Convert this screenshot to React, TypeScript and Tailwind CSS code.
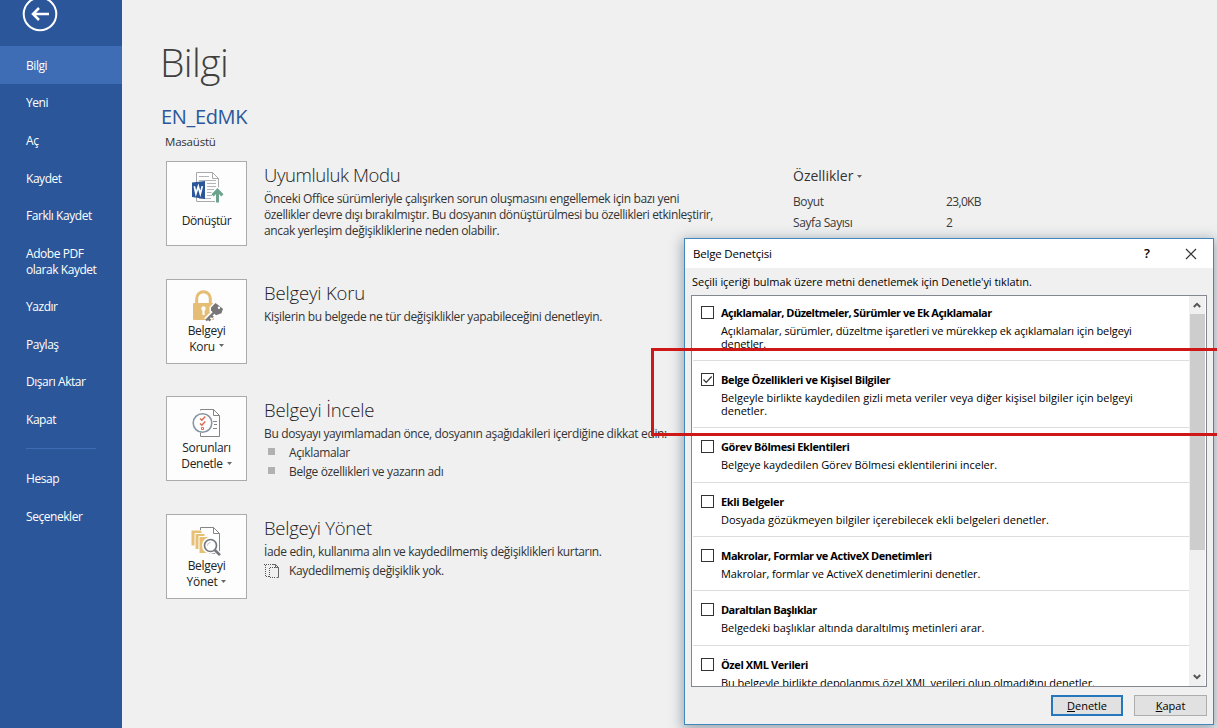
import React from "react";

const navItems = [
  { label: "Bilgi", active: true },
  { label: "Yeni" },
  { label: "Aç" },
  { label: "Kaydet" },
  { label: "Farklı Kaydet" },
  { label: "Adobe PDF\nolarak Kaydet", tall: true },
  { label: "Yazdır" },
  { label: "Paylaş" },
  { label: "Dışarı Aktar" },
  { label: "Kapat" },
];

function ConvertIcon() {
  return (
    <svg width="34" height="34" viewBox="0 0 34 34" fill="none">
      <path d="M6.5 1.5h16l6 6v23h-22z" fill="#fff" stroke="#a9a9a9" />
      <path d="M22.5 1.5v6h6" stroke="#a9a9a9" />
      <path d="M9 5.5h10M9 9.5h17M17 12.5h9M17 15.5h9M17 18.5h7M17 21.5h5M9 27.5h12M17 24.5h5" stroke="#b5b5b5" />
      <path d="M2 11.5 15 10v18L2 26z" fill="#2b579a" />
      <path d="m4.3 15.3 1.6 7.4 2.4-7.2 2 7.4 2-7.8" stroke="#fff" strokeWidth="1.7" />
      <path d="M27.5 32V19M22.5 24.3l5-5.3 5 5.3" stroke="#fff" strokeWidth="5" />
      <path d="M27.5 31.5V19M22.6 24.4l4.9-5.2 4.9 5.2" stroke="#6ba38c" strokeWidth="3" />
    </svg>
  );
}

function LockIcon() {
  return (
    <svg width="34" height="34" viewBox="0 0 34 34" fill="none">
      <path d="M6.7 15V9.5a6.8 6.8 0 0 1 13.6 0V15" stroke="#e6bd74" strokeWidth="3" />
      <rect x="3" y="14" width="21" height="17" rx="1" fill="#e6bd74" />
      <circle cx="13.5" cy="19.5" r="2.2" fill="#fff" />
      <path d="M13.5 20v6" stroke="#fff" strokeWidth="2.2" />
      <path d="m16.500 31.500 8.500-8.500" stroke="#fff" strokeWidth="6.500" />
      <path d="m19.500 18 5.500-5.500 9 7-1.500 6.500-7 2.500-6-6z" fill="#fff" />
      <path d="m16 31.500 9-9M18 29.500l2.500 2M21 26.500l2 2" stroke="#777" strokeWidth="2.400" />
      <path d="m21 18.500 4.500-4.500 7.500 5.800-1.500 4.500-5.500 2-5-4.800z" fill="#777" />
      <circle cx="29" cy="18.800" r="1.200" fill="#fff" />
    </svg>
  );
}

function InspectIcon() {
  return (
    <svg width="34" height="34" viewBox="0 0 34 34" fill="none">
      <path d="M10.500 4.500v-1h13l6 6v21h-19v-4" fill="#fff" stroke="#858585" />
      <path d="M23.500 3.500v6h6M23 15.500h4M24 18.500h3M23 22.500h4" stroke="#858585" />
      <circle cx="12.500" cy="17" r="9.300" fill="#fff" stroke="#8795a4" strokeWidth="1.600" />
      <path d="m10 12.500 1.800 1.700 3.500-3.700M10 17.500l1.800 1.700 3.500-3.700" stroke="#db6b52" strokeWidth="1.500" />
      <path d="M11.500 21.500h2v2h-2z" stroke="#db6b52" />
    </svg>
  );
}

function ManageIcon() {
  return (
    <svg width="34" height="34" viewBox="0 0 34 34" fill="none">
      <path d="M10.500 6V3.500h13l6 6v20h-12" fill="#fff" stroke="#858585" />
      <path d="M23.500 3.500v6h6" stroke="#858585" />
      <path d="M1.500 6.500h10v15h-10z" fill="#e6c076" />
      <path d="M5 9.500h10v16H5z" fill="#e6c076" stroke="#fff" />
      <path d="M9 12.500h10v17H9z" fill="#e6c076" stroke="#fff" />
      <path d="m25 26 5 5" stroke="#fff" strokeWidth="5" />
      <circle cx="20.500" cy="21.500" r="6.500" fill="#fff" stroke="#fff" strokeWidth="4" />
      <circle cx="20.500" cy="21.500" r="6" fill="#fff" stroke="#73777d" strokeWidth="1.700" />
      <path d="m24.800 26 5.200 5.200" stroke="#73777d" strokeWidth="2.600" />
      <path d="M17.500 21.500a3 3 0 0 1 3-3" stroke="#b7bcc3" />
    </svg>
  );
}

function Caret({ className = "" }: { className?: string }) {
  return (
    <svg className={"inline-block " + className} width="5" height="3" viewBox="0 0 5 3">
      <path d="M0 0h5L2.500 3z" fill="#666" />
    </svg>
  );
}

function Section({
  icon,
  button,
  title,
  titleTrack = "",
  children,
}: {
  icon: React.ReactNode;
  button: React.ReactNode;
  title: string;
  titleTrack?: string;
  children: React.ReactNode;
}) {
  return (
    <section className="flex h-[117.700px] items-start">
      <button className="flex h-[85px] w-[81px] shrink-0 flex-col items-center border border-[#ababab] bg-[#fdfdfd] pt-[9px] text-center text-[12px] leading-[16px] tracking-[-0.300px] text-[#222]">
        {icon}
        {button}
      </button>
      <div className="ml-[17px] pt-[2px] text-[12px] leading-[16px] tracking-[-0.360px] whitespace-nowrap text-[#333]">
        <h2 className={"h-[28px] text-[18.500px] leading-[24px] font-light text-[#222] " + titleTrack}>{title}</h2>
        {children}
      </div>
    </section>
  );
}

const checks = [
  { title: "Açıklamalar, Düzeltmeler, Sürümler ve Ek Açıklamalar", lines: ["Açıklamalar, sürümler, düzeltme işaretleri ve mürekkep ek açıklamaları için belgeyi", "denetler."], track: "tracking-[-0.125px]", bold: "tracking-[-0.500px]" },
  { title: "Belge Özellikleri ve Kişisel Bilgiler", lines: ["Belgeyle birlikte kaydedilen gizli meta veriler veya diğer kişisel bilgiler için belgeyi", "denetler."], checked: true, track: "tracking-[0px]", bold: "tracking-[-0.380px]" },
  { title: "Görev Bölmesi Eklentileri", lines: ["Belgeye kaydedilen Görev Bölmesi eklentilerini inceler."], track: "tracking-[-0.050px]", bold: "tracking-[-0.400px]" },
  { title: "Ekli Belgeler", lines: ["Dosyada gözükmeyen bilgiler içerebilecek ekli belgeleri denetler."], track: "tracking-[-0.020px]", bold: "tracking-[-0.350px]" },
  { title: "Makrolar, Formlar ve ActiveX Denetimleri", lines: ["Makrolar, formlar ve ActiveX denetimlerini denetler."], track: "tracking-[-0.110px]", bold: "tracking-[-0.450px]" },
  { title: "Daraltılan Başlıklar", lines: ["Belgedeki başlıklar altında daraltılmış metinleri arar."], track: "tracking-[-0.050px]", bold: "tracking-[-0.520px]" },
  { title: "Özel XML Verileri", lines: ["Bu belgeyle birlikte depolanmış özel XML verileri olup olmadığını denetler."], track: "tracking-[-0.050px]", bold: "tracking-[-0.400px]" },
];

function InspectorDialog() {
  return (
    <div className="absolute top-[238px] left-[684px] flex h-[487px] w-[530px] flex-col border border-[#3f87bd] bg-[#f0f0f0] text-[11px] text-black shadow-[0_3px_12px_2px_rgba(60,80,100,0.45)]">
      <header className="flex h-[29px] shrink-0 items-center bg-white pl-[8px]">
        <span className="grow text-[11.500px] tracking-[-0.200px]">Belge Denetçisi</span>
        <span className="mr-[35px] text-[13px] font-semibold">?</span>
        <svg className="mr-[16px]" width="12" height="12" viewBox="0 0 12 12">
          <path d="m1 1 10 10M11 1 1 11" stroke="#333" strokeWidth="1.200" />
        </svg>
      </header>
      <p className="flex h-[27px] shrink-0 items-center pt-[2px] pl-[7px] tracking-[-0.040px] whitespace-nowrap">
        Seçili içeriği bulmak üzere metni denetlemek için Denetle'yi tıklatın.
      </p>
      <div className="ml-[6px] flex h-[392px] w-[516px] shrink-0 border border-[#828790] bg-white">
        <ul className="w-[497px] overflow-hidden pl-px">
          {checks.map((c) => (
            <li
              key={c.title}
              className={
                "flex border-b border-[#dcdcdc] pl-[8px] " +
                (c.lines.length === 1 ? "h-[54.300px] pt-[12px]" : c.checked ? "h-[67.300px] pt-[12px]" : "h-[65.200px] pt-[10px]")
              }
            >
              <span className="flex h-[13px] w-[13px] shrink-0 items-center justify-center border border-[#333] bg-white">
                {c.checked && (
                  <svg width="11" height="11" viewBox="0 0 11 11" fill="none">
                    <path d="m1.500 5.500 2.700 2.800L9.700 2.500" stroke="#333" strokeWidth="1.200" />
                  </svg>
                )}
              </span>
              <div className="ml-[7px] whitespace-nowrap">
                <h3 className={"-mt-px h-[19px] text-[11px] leading-[15px] font-bold " + c.bold}>{c.title}</h3>
                {c.lines.map((l) => (
                  <p key={l} className={"leading-[13px] " + c.track}>{l}</p>
                ))}
              </div>
            </li>
          ))}
        </ul>
        <div className="flex w-[16px] flex-col items-center justify-between bg-[#f0f0f0]">
          <svg className="my-[6px]" width="8" height="6" viewBox="0 0 8 6" fill="none">
            <path d="m.8 5 3.200-3.200L7.200 5" stroke="#555" strokeWidth="2" />
          </svg>
          <div className="h-[236px] w-[15px] bg-[#cdcdcd]" />
          <div className="grow" />
          <svg className="my-[6px]" width="8" height="6" viewBox="0 0 8 6" fill="none">
            <path d="m.8 1 3.200 3.200L7.200 1" stroke="#555" strokeWidth="2" />
          </svg>
        </div>
      </div>
      <footer className="flex justify-end gap-[11px] pt-[8px] pr-[6px]">
        <button className="h-[21px] w-[72px] border-2 border-[#2577bd] bg-[#e1e1e1] leading-[18px]">
          <u>D</u>enetle
        </button>
        <button className="h-[21px] w-[73px] border border-[#adadad] bg-[#e1e1e1] leading-[20px]">
          <u>K</u>apat
        </button>
      </footer>
    </div>
  );
}

export default function App() {
  return (
    <div className="relative flex h-[728px] w-[1217px] overflow-hidden bg-[#f0f0f0] font-['Open_Sans','Noto_Sans',sans-serif]">
      <aside className="flex w-[122px] shrink-0 flex-col bg-[#2b579a] text-[12px] tracking-[-0.450px] text-white">
        <div className="h-[46px] shrink-0 pl-[22px]">
          <svg width="36" height="36" viewBox="0 0 36 36" fill="none" className="-mt-[4px]">
            <circle cx="18" cy="18" r="16.300" stroke="#fff" strokeWidth="2" />
            <path d="M27 18H11M17 12l-6 6 6 6" stroke="#fff" strokeWidth="2.500" />
          </svg>
        </div>
        <nav className="flex flex-col">
          {navItems.map((n) => (
            <a
              key={n.label}
              className={
                "flex items-center pt-[2px] pl-[26px] leading-[16px] whitespace-pre" +
                (n.tall ? " h-[53.300px]" : " h-[37.600px]") +
                (n.active ? " bg-[#3e6db5]" : "")
              }
            >
              {n.label}
            </a>
          ))}
        </nav>
        <hr className="mt-[10px] mr-[26px] mb-[12px] ml-[26px] border-[#3e6db5]" />
        <a className="flex h-[37.600px] items-center pl-[26px]">Hesap</a>
        <a className="flex h-[37.600px] items-center pl-[26px]">Seçenekler</a>
      </aside>

      <main className="w-[570px] shrink-0 pl-[44px]">
        <h1 className="-ml-[6px] mt-[33px] h-[69px] text-[39px] leading-[58px] font-light tracking-[-0.600px] text-[#3f3f3f]">Bilgi</h1>
        <p className="-ml-[5px] h-[31px] text-[20px] leading-[30px] tracking-[-0.350px] text-[#2b579a]">EN_EdMK</p>
        <p className="-ml-px h-[28px] text-[11.500px] leading-[18px] tracking-[-0.200px] text-[#333]">Masaüstü</p>
        <Section icon={<ConvertIcon />} button={<span className="mt-[8px] tracking-[-0.450px]">Dönüştür</span>} title="Uyumluluk Modu" titleTrack="tracking-[-0.400px]">
          <p>Önceki Office sürümleriyle çalışırken sorun oluşmasını engellemek için bazı yeni</p>
          <p className="tracking-[-0.400px]">özellikler devre dışı bırakılmıştır. Bu dosyanın dönüştürülmesi bu özellikleri etkinleştirir,</p>
          <p>ancak yerleşim değişikliklerine neden olabilir.</p>
        </Section>
        <Section icon={<LockIcon />} button={<span>Belgeyi<br />Koru<Caret className="ml-[4px] mb-[3px]" /></span>} title="Belgeyi Koru" titleTrack="tracking-[-0.150px]">
          <p>Kişilerin bu belgede ne tür değişiklikler yapabileceğini denetleyin.</p>
        </Section>
        <Section icon={<InspectIcon />} button={<span>Sorunları<br />Denetle<Caret className="ml-[4px] mb-[3px]" /></span>} title="Belgeyi İncele" titleTrack="tracking-[-0.120px]">
          <p>Bu dosyayı yayımlamadan önce, dosyanın aşağıdakileri içerdiğine dikkat edin:</p>
          <ul className="mt-[2px] leading-[18.500px]">
            <li className="flex items-center"><span className="mr-[14px] mb-[4px] ml-[4px] h-[7px] w-[7px] bg-[#b1b1b1]" />Açıklamalar</li>
            <li className="flex items-center"><span className="mr-[14px] mb-[4px] ml-[4px] h-[7px] w-[7px] bg-[#b1b1b1]" />Belge özellikleri ve yazarın adı</li>
          </ul>
        </Section>
        <Section icon={<ManageIcon />} button={<span>Belgeyi<br />Yönet<Caret className="ml-[4px] mb-[3px]" /></span>} title="Belgeyi Yönet" titleTrack="tracking-[-0.250px]">
          <p>İade edin, kullanıma alın ve kaydedilmemiş değişiklikleri kurtarın.</p>
          <p className="mt-[3px] flex items-center">
            <svg className="mr-[9px]" width="16" height="16" viewBox="0 0 16 16" fill="none">
              <path d="M0 1.500h9M1.500 2v12M2 13.500h3M5.500 5v10M6 4.500h5M6 14.500h6" stroke="#555" strokeDasharray="1 1" />
              <path d="M8.500 1.500h3l3 3v10h-2M11.500 1.500v3h3" stroke="#666" />
            </svg>
            Kaydedilmemiş değişiklik yok.
          </p>
        </Section>
      </main>

      <section className="ml-[101px] pt-[165px] text-[12px] text-[#3a3a3a]">
        <h2 className="flex items-center text-[14px] leading-[22px] text-[#333]">Özellikler<Caret className="ml-[4px]" /></h2>
        <dl className="mt-[4px] grid grid-cols-[153px_60px] leading-[21px] tracking-[-0.400px]">
          <dt>Boyut</dt>
          <dd className="tracking-[-0.650px]">23,0KB</dd>
          <dt>Sayfa Sayısı</dt>
          <dd>2</dd>
        </dl>
      </section>

      <InspectorDialog />
      <div className="absolute top-[348px] left-[651px] h-[88px] w-[580px] border-[3px] border-[#cf1717]" />
    </div>
  );
}
